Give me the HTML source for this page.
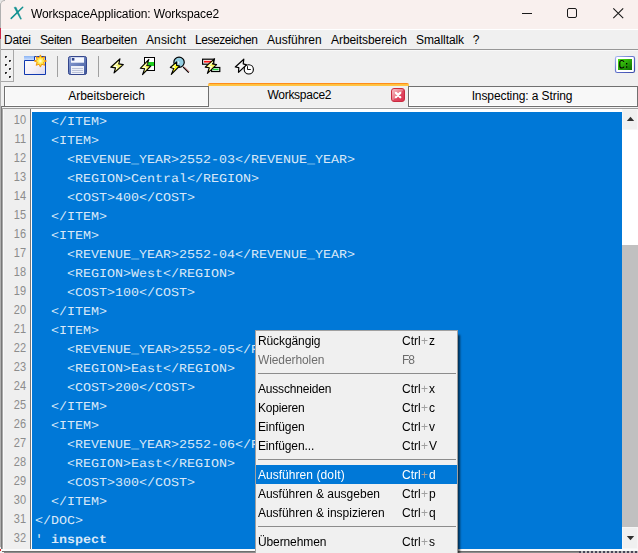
<!DOCTYPE html>
<html>
<head>
<meta charset="utf-8">
<title>WorkspaceApplication: Workspace2</title>
<style>
html,body{margin:0;padding:0;}
body{width:638px;height:553px;overflow:hidden;position:relative;background:#f0f0f0;font-family:"Liberation Sans",sans-serif;font-size:12px;color:#000;}
.abs{position:absolute;}
#titlebar{left:0;top:0;width:638px;height:29px;background:#f9f0ee;}
#title{left:31px;top:7px;font-size:12px;letter-spacing:-0.11px;will-change:transform;white-space:nowrap;color:#000;}
#whiteline{left:0;top:29px;width:638px;height:1px;background:#fff;}
#menubar{left:0;top:30px;width:638px;height:19px;background:#f0f0f0;}
.mi{position:absolute;top:33px;font-size:12px;white-space:nowrap;color:#000;}
#sep1{left:0;top:49px;width:638px;height:1px;background:#979797;}
#sep1b{left:0;top:50px;width:638px;height:1px;background:#f8f8f8;}
#toolbar{left:0;top:51px;width:638px;height:32px;background:#f0f0f0;}
#grip{left:1px;top:50px;width:12px;height:31px;border-right:1px solid #a8a8a8;border-bottom:1px solid #a8a8a8;background:#f0f0f0;}
.tab{position:absolute;box-sizing:border-box;font-size:12px;text-align:center;white-space:nowrap;}
#tab1{left:4px;top:86px;width:205px;height:21px;border:1px solid #707070;background:#f8f8f8;line-height:18px;box-shadow:inset 1px -1px 0 #fff;}
#tab3{left:408px;top:86px;width:230px;height:21px;border:1px solid #707070;background:#f8f8f8;line-height:18px;box-shadow:inset 1px -1px 0 #fff;}
#tab2{left:209px;top:83px;width:199px;height:24px;background:#f0f0f0;line-height:25px;z-index:0;}
#tab2o{left:208px;top:83px;width:201px;height:3px;background:linear-gradient(#ff8c1c 0,#ff8c1c 1px,#ffbe3c 1px,#ffc848 3px);border-radius:2px 2px 0 0;}
#tabline{left:1px;top:106px;width:637px;height:1px;background:#6e6e6e;}
#tabline2{left:2px;top:107px;width:636px;height:1px;background:#f4f4f4;}
#tabline3{left:2px;top:108px;width:636px;height:1px;background:#a0a0a0;}
#leftb0{left:0;top:6px;width:1px;height:541px;background:#b4b4b4;}
#leftb1{left:1px;top:106px;width:1px;height:445px;background:#787878;}
#leftb2{left:2px;top:108px;width:1px;height:443px;background:#a8a8a8;}
#editorframe{left:3px;top:109px;width:635px;height:442px;background:#fff;}
#gutter{left:3px;top:109px;width:27px;height:440px;background:#efefef;border-left:1px solid #fafafa;box-sizing:border-box;}
#gutterline{left:30px;top:109px;width:1px;height:440px;background:#7a7a7a;}
#code{left:32px;top:112px;width:590px;height:437px;background:#0078d7;}
.ln{position:absolute;left:3px;width:23px;text-align:right;font-size:12.5px;color:#8c8c8c;height:19px;line-height:19px;transform:scaleX(0.88);transform-origin:100% 50%;}
.cl{position:absolute;left:35px;font-family:"Liberation Mono",monospace;font-size:13.33px;color:#d9e8f8;white-space:pre;height:19px;line-height:19px;text-rendering:geometricPrecision;transform:scaleY(0.9);transform-origin:0 14px;margin-top:2px;}
.cl b{font-weight:bold;}
#sbar{left:622px;top:109px;width:16px;height:440px;background:#fff;}
#sthumb{left:622px;top:245px;width:16px;height:282px;background:#c0c0c0;}
#sup{left:622px;top:109px;width:16px;height:21px;background:#f0f0f0;box-shadow:inset 0 0 0 1px #f6f6f6;}
#sdown{left:622px;top:527px;width:16px;height:22px;background:#f0f0f0;box-shadow:inset 0 0 0 1px #f6f6f6;}
#bot1{left:1px;top:549px;width:637px;height:2px;background:#fafafa;}
#bot2{left:2px;top:551px;width:636px;height:1px;background:#6e6e6e;}
#bot3{left:4px;top:552px;width:634px;height:1px;background:#8c8c8c;}
#bot4{left:579px;top:551px;width:59px;height:2px;background:repeating-linear-gradient(90deg,#4a4658 0,#4a4658 2px,#b8b8b8 2px,#b8b8b8 4px);}
#menu{left:255px;top:330px;width:203px;height:230px;background:#f0f0f0;border:1px solid #a0a0a0;box-sizing:border-box;box-shadow:3px 4px 2px -1px rgba(0,0,0,0.6);}
.m{position:absolute;left:0;width:201px;height:19px;line-height:19px;font-size:12px;white-space:nowrap;}
.m .l{position:absolute;left:1.9px;top:1px;}
.m .r{position:absolute;left:146px;top:1px;}
.m .r i{font-style:normal;color:#a0a0a0;letter-spacing:0.8px;margin-left:0.4px;}
.m.dis{color:#6d6d6d;}
.m.sel{background:#0078d7;color:#fff;}
.msep{position:absolute;left:2px;width:198px;height:1px;background:#8c8c8c;}
</style>
</head>
<body>
<div id="titlebar" class="abs"></div>
<div id="title" class="abs">WorkspaceApplication: Workspace2</div>
<div id="whiteline" class="abs"></div>
<div id="menubar" class="abs"></div>
<div class="mi" style="left:4px;letter-spacing:-0.25px">Datei</div>
<div class="mi" style="left:40px;letter-spacing:-0.4px">Seiten</div>
<div class="mi" style="left:81px;letter-spacing:-0.22px">Bearbeiten</div>
<div class="mi" style="left:146px;letter-spacing:0.12px">Ansicht</div>
<div class="mi" style="left:195px;letter-spacing:-0.45px">Lesezeichen</div>
<div class="mi" style="left:267px;letter-spacing:0px">Ausführen</div>
<div class="mi" style="left:331px;letter-spacing:-0.06px">Arbeitsbereich</div>
<div class="mi" style="left:416px;letter-spacing:-0.07px">Smalltalk</div>
<div class="mi" style="left:472.7px;letter-spacing:0px">?</div>
<div id="sep1" class="abs"></div>
<div id="sep1b" class="abs"></div>
<div id="toolbar" class="abs"></div>
<div id="grip" class="abs"></div>
<div id="tabline" class="abs"></div>
<div id="tabline2" class="abs"></div>
<div id="tabline3" class="abs"></div>
<div id="leftb1" class="abs"></div><div id="leftb2" class="abs"></div>
<div id="tab1" class="tab">Arbeitsbereich</div>
<div id="tab3" class="tab"><span style="position:relative;left:-1px;letter-spacing:-0.1px">Inspecting: a String</span></div>
<div id="tab2" class="tab"><span style="position:relative;left:-9.2px;letter-spacing:-0.27px">Workspace2</span></div>
<div id="tab2o" class="abs"></div>
<div id="editorframe" class="abs"></div>
<div id="gutter" class="abs"></div>
<div id="gutterline" class="abs"></div>
<div id="code" class="abs"></div>
<div id="lines">
<div class="ln" style="top:111px">10</div><div class="cl" style="top:111px">  &lt;/ITEM&gt;</div>
<div class="ln" style="top:130px">11</div><div class="cl" style="top:130px">  &lt;ITEM&gt;</div>
<div class="ln" style="top:149px">12</div><div class="cl" style="top:149px">    &lt;REVENUE_YEAR&gt;2552-03&lt;/REVENUE_YEAR&gt;</div>
<div class="ln" style="top:168px">13</div><div class="cl" style="top:168px">    &lt;REGION&gt;Central&lt;/REGION&gt;</div>
<div class="ln" style="top:187px">14</div><div class="cl" style="top:187px">    &lt;COST&gt;400&lt;/COST&gt;</div>
<div class="ln" style="top:206px">15</div><div class="cl" style="top:206px">  &lt;/ITEM&gt;</div>
<div class="ln" style="top:225px">16</div><div class="cl" style="top:225px">  &lt;ITEM&gt;</div>
<div class="ln" style="top:244px">17</div><div class="cl" style="top:244px">    &lt;REVENUE_YEAR&gt;2552-04&lt;/REVENUE_YEAR&gt;</div>
<div class="ln" style="top:263px">18</div><div class="cl" style="top:263px">    &lt;REGION&gt;West&lt;/REGION&gt;</div>
<div class="ln" style="top:282px">19</div><div class="cl" style="top:282px">    &lt;COST&gt;100&lt;/COST&gt;</div>
<div class="ln" style="top:301px">20</div><div class="cl" style="top:301px">  &lt;/ITEM&gt;</div>
<div class="ln" style="top:320px">21</div><div class="cl" style="top:320px">  &lt;ITEM&gt;</div>
<div class="ln" style="top:339px">22</div><div class="cl" style="top:339px">    &lt;REVENUE_YEAR&gt;2552-05&lt;/REVENUE_YEAR&gt;</div>
<div class="ln" style="top:358px">23</div><div class="cl" style="top:358px">    &lt;REGION&gt;East&lt;/REGION&gt;</div>
<div class="ln" style="top:377px">24</div><div class="cl" style="top:377px">    &lt;COST&gt;200&lt;/COST&gt;</div>
<div class="ln" style="top:396px">25</div><div class="cl" style="top:396px">  &lt;/ITEM&gt;</div>
<div class="ln" style="top:415px">26</div><div class="cl" style="top:415px">  &lt;ITEM&gt;</div>
<div class="ln" style="top:434px">27</div><div class="cl" style="top:434px">    &lt;REVENUE_YEAR&gt;2552-06&lt;/REVENUE_YEAR&gt;</div>
<div class="ln" style="top:453px">28</div><div class="cl" style="top:453px">    &lt;REGION&gt;East&lt;/REGION&gt;</div>
<div class="ln" style="top:472px">29</div><div class="cl" style="top:472px">    &lt;COST&gt;300&lt;/COST&gt;</div>
<div class="ln" style="top:491px">30</div><div class="cl" style="top:491px">  &lt;/ITEM&gt;</div>
<div class="ln" style="top:510px">31</div><div class="cl" style="top:510px">&lt;/DOC&gt;</div>
<div class="ln" style="top:529px">32</div><div class="cl" style="top:529px">&#x27; <b>inspect</b></div>
</div>
<div id="sbar" class="abs"></div>
<div id="sthumb" class="abs"></div>
<div id="sup" class="abs"></div>
<div id="sdown" class="abs"></div>
<div id="bot1" class="abs"></div><div id="bot2" class="abs"></div><div id="bot3" class="abs"></div><div id="bot4" class="abs"></div>
<svg id="icons" class="abs" style="left:0;top:0" width="638" height="553" viewBox="0 0 638 553">
<defs>
<linearGradient id="gw" x1="0" y1="0" x2="1" y2="1"><stop offset="0" stop-color="#ffffff"/><stop offset="0.55" stop-color="#f6f0f6"/><stop offset="1" stop-color="#d8d8ee"/></linearGradient>
<linearGradient id="gt" x1="0" y1="0" x2="0" y2="1"><stop offset="0" stop-color="#8ab4f4"/><stop offset="1" stop-color="#d4e4ff"/></linearGradient>
<linearGradient id="gs" x1="0" y1="0" x2="1" y2="1"><stop offset="0" stop-color="#90a4d8"/><stop offset="1" stop-color="#40589c"/></linearGradient>
<linearGradient id="gg" x1="0" y1="0" x2="1" y2="1"><stop offset="0" stop-color="#48e010"/><stop offset="1" stop-color="#0a6a00"/></linearGradient>
<linearGradient id="gr" x1="0" y1="0" x2="1" y2="1"><stop offset="0" stop-color="#f8c8cc"/><stop offset="0.5" stop-color="#ea7886"/><stop offset="0.52" stop-color="#e04a62"/><stop offset="1" stop-color="#dc3050"/></linearGradient>
<radialGradient id="gy" cx="0.5" cy="0.5" r="0.5"><stop offset="0" stop-color="#ffffff"/><stop offset="0.35" stop-color="#fff060"/><stop offset="1" stop-color="#ffd010"/></radialGradient>
<linearGradient id="gb" x1="0" y1="0" x2="1" y2="1"><stop offset="0" stop-color="#a8b8f0"/><stop offset="0.5" stop-color="#6070cc"/><stop offset="1" stop-color="#3848a8"/></linearGradient>
</defs>
<path d="M0.5 547 V5 Q0.5 0.5 5 0.5" fill="none" stroke="#b0b0b0" stroke-width="1"/>
<rect x="0" y="0" width="2" height="1" fill="#e6e6e6"/><rect x="0" y="1" width="1" height="2" fill="#e6e6e6"/>
<rect x="0" y="28" width="1" height="11" fill="#cc2848"/>
<rect x="0" y="549" width="1" height="2" fill="#e02020"/>
<!-- title icon -->
<path d="M22.7 7.3 L11.2 18.4" stroke="#109090" stroke-width="1.5" stroke-linecap="round" fill="none"/>
<path d="M14.2 7.4 L16 7.2 L21.4 19 L20.6 19.2 Z" fill="#109090" stroke="#109090" stroke-width="0.6" stroke-linejoin="round"/>
<!-- window controls -->
<path d="M522 13.5 H532" stroke="#1a1a1a" stroke-width="1"/>
<rect x="567.5" y="8.5" width="9" height="9" rx="1.5" fill="none" stroke="#1a1a1a" stroke-width="1"/>
<path d="M613.3 8.3 L623.2 18.2 M623.2 8.3 L613.3 18.2" stroke="#1a1a1a" stroke-width="1.1"/>
<!-- grip -->
<g fill="#2a2a2a"><rect x="5" y="56" width="2" height="2"/><rect x="9" y="60" width="2" height="2"/><rect x="5" y="64" width="2" height="2"/><rect x="9" y="68" width="2" height="2"/><rect x="5" y="72" width="2" height="2"/><rect x="9" y="76" width="2" height="2"/></g><rect x="6" y="57" width="1" height="1" fill="#8a8a8a"/><rect x="7" y="57" width="1" height="1" fill="#fff"/><rect x="6" y="58" width="1" height="1" fill="#fff"/><rect x="10" y="61" width="1" height="1" fill="#8a8a8a"/><rect x="11" y="61" width="1" height="1" fill="#fff"/><rect x="10" y="62" width="1" height="1" fill="#fff"/><rect x="6" y="65" width="1" height="1" fill="#8a8a8a"/><rect x="7" y="65" width="1" height="1" fill="#fff"/><rect x="6" y="66" width="1" height="1" fill="#fff"/><rect x="10" y="69" width="1" height="1" fill="#8a8a8a"/><rect x="11" y="69" width="1" height="1" fill="#fff"/><rect x="10" y="70" width="1" height="1" fill="#fff"/><rect x="6" y="73" width="1" height="1" fill="#8a8a8a"/><rect x="7" y="73" width="1" height="1" fill="#fff"/><rect x="6" y="74" width="1" height="1" fill="#fff"/><rect x="10" y="77" width="1" height="1" fill="#8a8a8a"/><rect x="11" y="77" width="1" height="1" fill="#fff"/><rect x="10" y="78" width="1" height="1" fill="#fff"/>
<!-- new workspace icon -->
<rect x="24" y="56" width="10.5" height="4.5" fill="url(#gt)"/>
<path d="M24.5 60.5 H34.5 V56.5 H45.5 V74.5 H24.5 Z" fill="url(#gw)" stroke="#1038b0" stroke-width="1"/>
<path d="M40.4 54.9 L41.7 57.8 L44.7 56.7 L43.6 59.7 L46.5 61.0 L43.6 62.3 L44.7 65.3 L41.7 64.2 L40.4 67.1 L39.1 64.2 L36.1 65.3 L37.2 62.3 L34.3 61.0 L37.2 59.7 L36.1 56.7 L39.1 57.8 Z" fill="url(#gy)" stroke="#f09000" stroke-width="0.9" stroke-linejoin="round"/>
<!-- separators -->
<path d="M57.5 56 V77 M98.5 56 V77" stroke="#a0a0a0" stroke-width="1"/>
<!-- save icon -->
<rect x="68.5" y="56.5" width="18" height="18" rx="1.8" fill="url(#gs)" stroke="#34468c" stroke-width="1"/>
<rect x="71" y="57.3" width="13" height="5.4" fill="#f6f8ff"/>
<rect x="71.8" y="58" width="2.6" height="2.6" fill="#34468c"/>
<rect x="71" y="66" width="13" height="8" fill="#eef0f8"/>
<path d="M72 68.5 H83 M72 70.5 H83 M72 72.5 H83" stroke="#b4bcd4" stroke-width="0.9"/>
<!-- bolt 1 -->
<path d="M119.9 58.9 L110.8 67.2 L115.5 67.9 L114.1 72.9 L123.3 64.6 L118.8 63.9 Z" fill="#f6f670" stroke="#000" stroke-width="1.2" stroke-linejoin="round"/>
<path d="M118.3 62.4 L114.3 66.3 L117.2 66.6 L116.4 69" stroke="#fff" stroke-width="1" fill="none"/>
<!-- bolt 2 + doc -->
<rect x="144.5" y="57.5" width="10" height="13" fill="#fff" stroke="#000" stroke-width="1"/>
<rect x="148" y="62" width="6" height="4" fill="#20d020"/>
<path d="M148.9 59.4 L140.3 68.3 L144.7 68.8 L142.5 74.6 L150.8 66 L146.8 65.5 Z" fill="#f6f650" stroke="#000" stroke-width="1.1" stroke-linejoin="round"/>
<path d="M147 63.5 L143.4 67.3 L146.2 67.6 L145 70.4" stroke="#fff" stroke-width="0.9" fill="none"/>
<!-- magnifier bolt -->
<path d="M183.4 67.4 L188.4 72.4" stroke="#000" stroke-width="1.1" stroke-linecap="round"/>
<path d="M184.2 66.9 L189 71.7" stroke="#a04444" stroke-width="0.9" stroke-linecap="round"/>
<circle cx="179.05" cy="62.25" r="5.2" fill="#94cee2" stroke="#000" stroke-width="1.2"/>
<path d="M177.6 60.4 L179.6 62.4 L177.8 64.2 Z" fill="#fff" opacity="0.9"/>
<path d="M176.7 61.9 L170.3 67.5 L173.8 68.4 L171.3 74.4 L179.6 66 L176.6 65.4 Z" fill="#ffff10" stroke="#000" stroke-width="1.1" stroke-linejoin="round"/>
<path d="M175.6 65 L172.6 67.3 L175 67.6" stroke="#fff" stroke-width="0.8" fill="none"/>
<!-- red/green bolt -->
<rect x="202.6" y="59.2" width="11.2" height="5" fill="#fff" stroke="#000" stroke-width="1.2"/>
<rect x="204" y="60.8" width="7.4" height="1.8" fill="#ff1818"/>
<rect x="211.6" y="67.5" width="8.2" height="4" fill="#fff" stroke="#000" stroke-width="1.2"/>
<rect x="212.6" y="68.7" width="6" height="1.5" fill="#18d838"/>
<path d="M214.6 58.7 L205.2 67.1 L209.3 67.8 L207.4 73.4 L216.6 64.6 L212.6 64 Z" fill="#f8f860" stroke="#000" stroke-width="1.1" stroke-linejoin="round"/>
<path d="M212.8 62.2 L208.6 66.2 L211.6 66.6 L210 69.6" stroke="#fff" stroke-width="0.9" fill="none"/>
<!-- clock bolt -->
<path d="M243.8 59.2 L235.3 67 L238.8 67.6 L238.5 72.4 L246.6 64.8 L243.2 63.9 Z" fill="#f8f8f8" stroke="#000" stroke-width="1.2" stroke-linejoin="round"/>
<circle cx="248.8" cy="69.4" r="4.6" fill="#fff" stroke="#000" stroke-width="1.1"/>
<path d="M247.5 66.2 V69.5 H250.8" fill="none" stroke="#000" stroke-width="0.9"/>
<!-- C: icon -->
<rect x="615.5" y="56.5" width="19" height="16" rx="1.8" fill="#fff" stroke="url(#gb)" stroke-width="1.2"/>
<rect x="618" y="59" width="14" height="11" fill="url(#gg)"/>
<path d="M624 61.8 Q623.6 60.5 621.8 60.5 Q619.8 60.5 619.8 62.5 V66 Q619.8 68 621.8 68 Q623.6 68 624 66.7" fill="none" stroke="#000" stroke-width="1.1"/>
<rect x="626" y="63" width="1.3" height="1.4" fill="#000"/><rect x="626" y="66.3" width="1.3" height="1.4" fill="#000"/>
<!-- tab close button -->
<rect x="391.5" y="88.5" width="13" height="13" rx="2.5" fill="url(#gr)" stroke="#c82c40" stroke-width="1"/>
<path d="M395.9 92.9 L400.3 97.3 M400.3 92.9 L395.9 97.3" stroke="#fff" stroke-width="2.2" stroke-linecap="round"/>
<!-- scroll arrows -->
<path d="M626.8 121 L630.5 116.8 L634.2 121 Z" fill="#303030"/>
<path d="M626.8 536 L634.2 536 L630.5 540.2 Z" fill="#303030"/>
</svg>
<div id="menu" class="abs">
 <div class="m" style="top:0px"><span class="l" style="letter-spacing:-0.08px">Rückgängig</span><span class="r">Ctrl<i>+</i>z</span></div>
 <div class="m dis" style="top:19px"><span class="l" style="letter-spacing:-0.08px">Wiederholen</span><span class="r" style="letter-spacing:-1px">F8</span></div>
 <div class="msep" style="top:42px"></div>
 <div class="m" style="top:48px"><span class="l" style="letter-spacing:-0.17px">Ausschneiden</span><span class="r">Ctrl<i>+</i>x</span></div>
 <div class="m" style="top:67px"><span class="l" style="letter-spacing:-0.18px">Kopieren</span><span class="r">Ctrl<i>+</i>c</span></div>
 <div class="m" style="top:86px"><span class="l" style="letter-spacing:-0.08px">Einfügen</span><span class="r">Ctrl<i>+</i>v</span></div>
 <div class="m" style="top:105px"><span class="l" style="letter-spacing:-0.1px">Einfügen...</span><span class="r">Ctrl<i>+</i>V</span></div>
 <div class="msep" style="top:128px"></div>
 <div class="m sel" style="top:134px"><span class="l" style="letter-spacing:0.05px">Ausführen (doIt)</span><span class="r">Ctrl<i>+</i>d</span></div>
 <div class="m" style="top:153px"><span class="l">Ausführen &amp; ausgeben</span><span class="r">Ctrl<i>+</i>p</span></div>
 <div class="m" style="top:172px"><span class="l">Ausführen &amp; inspizieren</span><span class="r">Ctrl<i>+</i>q</span></div>
 <div class="msep" style="top:195px"></div>
 <div class="m" style="top:201px"><span class="l" style="letter-spacing:-0.09px">Übernehmen</span><span class="r">Ctrl<i>+</i>s</span></div>
</div>
</body>
</html>
